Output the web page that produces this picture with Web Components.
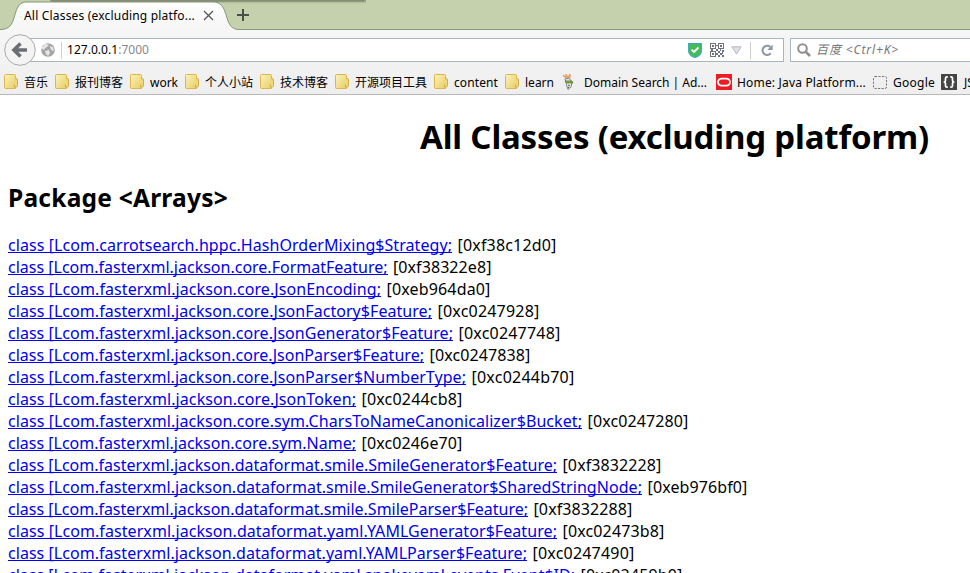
<!DOCTYPE html>
<html lang="zh-CN">
<head>
<meta charset="utf-8">
<title>All Classes (excluding platform)</title>
<style>
html,body{margin:0;height:573px;overflow:hidden;background:#fff}
body{font-family:"Noto Sans","Noto Sans CJK SC",sans-serif;color:#000}
</style>
</head>
<body>
<browser-window>
  <tab-strip slot="tabs"></tab-strip>
  <nav-bar slot="nav"></nav-bar>
  <bookmark-bar slot="bookmarks"></bookmark-bar>
  <class-page></class-page>
</browser-window>
<script>
const define = (name, html, setup) => {
  const t = document.createElement('template');
  t.innerHTML = html;
  customElements.define(name, class extends HTMLElement {
    connectedCallback() {
      if (this.shadowRoot) return;
      const root = this.attachShadow({mode: 'open'});
      root.append(t.content.cloneNode(true));
      if (setup) setup(this, root);
    }
  });
};

/* Single-line text that tracks its letters to occupy a given width. */
define('fit-text', `<style>:host{display:inline-block;white-space:pre}span{display:inline-block;text-decoration:inherit}</style><span><slot></slot></span>`,
  (el, root) => {
    const span = root.querySelector('span');
    const w = +el.getAttribute('w');
    const n = el.textContent.length;
    const natural = span.getBoundingClientRect().width;
    span.style.letterSpacing = ((w - natural) / n) + 'px';
    el.style.width = w + 'px';
  });

define('browser-window', `<style>:host{display:flex;flex-direction:column;width:970px;height:573px;overflow:hidden}
.bars{background:linear-gradient(#f6f6f6,#eeeeee);flex:none;height:64px;border-bottom:1px solid #b9b9b9;box-sizing:content-box}
::slotted(class-page){flex:1}</style>
<slot name="tabs"></slot><div class="bars"><slot name="nav"></slot><slot name="bookmarks"></slot></div><slot></slot>`);

define('tab-strip', `<style>
:host{display:flex;position:relative;height:30px;flex:none;background:#c4d1ac;font-size:12px;align-items:center}
svg.bg{position:absolute;left:0;top:0}
.title{position:relative;margin-left:24px;height:30px;line-height:32px}
.close{position:relative;margin-left:8px}.plus{position:relative;margin-left:23px}
</style>
<svg class="bg" width="970" height="30">
<defs><linearGradient id="s" x2="0" y2="1"><stop stop-color="#7f8b70"/><stop offset="1" stop-color="#c4d1ac" stop-opacity="0"/></linearGradient>
<linearGradient id="t" x2="0" y2="1"><stop stop-color="#fdfdfd"/><stop offset="1" stop-color="#f6f6f6"/></linearGradient></defs>
<rect x="50" width="316" height="5" fill="url(#s)"/>
<path d="M0 29.5H970" stroke="#829a7c"/>
<path d="M0 29.5C9 29.5 12 25 14 18C17 7 19 2 27 2H213C221 2 224 7 227 18C229 25 232 29.5 239 29.5V30H0Z" fill="url(#t)"/>
<path d="M0 29.5C9 29.5 12 25 14 18C17 7 19 2 27 2H213C221 2 224 7 227 18C229 25 232 29.5 239 29.5" fill="none" stroke="#879779"/>
<rect x="52" y="0" width="312" height="2" fill="#7f8773" opacity=".6"/>
</svg>
<fit-text class="title" w="171">All Classes (excluding platfo...</fit-text>
<svg class="close" width="11" height="11"><path d="M1 1L10 10M10 1L1 10" stroke="#555" stroke-width="1.3"/></svg>
<svg class="plus" width="12" height="12"><path d="M6 0V12M0 6H12" stroke="#4b4f46" stroke-width="2"/></svg>`);

define('nav-bar', `<style>
:host{display:flex;height:40px;padding-top:4px;box-sizing:border-box;font-size:12px}
.back{flex:none;margin-left:4px;z-index:1;position:relative}
.url,.search{box-sizing:border-box;height:24px;margin-top:4px;background:#fff;border:1px solid #abb5c0;display:flex;align-items:center;flex:none}
.url{width:754px;margin-left:-6px;padding-left:10px}
.sep{width:1px;height:17px;background:#cfcfcf;flex:none}
.addr{margin-left:5px;line-height:24px;color:#888}.addr b{font-weight:normal;color:#000}
.sp{flex:1}.search{width:190px;margin-left:6px;padding-left:6px;color:#777}
svg{flex:none}
i{display:flex;margin-left:5px;line-height:24px;white-space:pre}
</style>
<svg class="back" width="32" height="32"><circle cx="16" cy="16" r="15.3" fill="#f4f4f4" stroke="#a9a9a9"/><path d="M23 16H11M16.5 9.5L10 16L16.5 22.5" fill="none" stroke="#6b6e72" stroke-width="3.6"/></svg>
<div class="url">
<svg width="14" height="14"><circle cx="7" cy="7" r="6.8" fill="#a5a5a5"/><path d="M1 4L4 1L8 1.5L6 4L4 5L3 7L1 6ZM9 3L12 4L13 8L10 7ZM4 8L8 7L9 10L7 13L5 11Z" fill="#e6e6e6"/></svg>
<span class="sep" style="margin-left:6px"></span>
<fit-text class="addr" w="82"><b>127.0.0.1</b>:7000</fit-text><span class="sp"></span>
<svg width="14" height="15"><path d="M.7.7H13.3V8C13.3 11.5 10 13.5 7 14.5C4 13.5.7 11.5.7 8Z" fill="#45bd55" stroke="#3aa9bd" stroke-width="1.3"/><path d="M3.7 6.7L6 9L10.5 4.5" fill="none" stroke="#fff" stroke-width="1.8"/></svg>
<svg class="qr" width="14" height="14" style="margin-left:8px" shape-rendering="crispEdges"><g fill="none" stroke="#70757c"><path d="M.5.5H5.5V5.5H.5ZM8.5.5H13.5V5.5H8.5ZM.5 8.5H5.5V13.5H.5Z"/></g><path fill="#70757c" d="M2 2H4V4H2ZM10 2H12V4H10ZM2 10H4V12H2ZM6 2H8V3H6ZM6 6H8V8H6ZM1 6H3V8H1ZM8 8H10V10H8ZM12 7H14V9H12ZM10 10H12V12H10ZM8 12H10V14H8ZM12 12H14V14H12ZM10 6H11V8H10ZM12 9H13V11H12ZM6 10H8V12H6Z"/></svg>
<svg width="11" height="9" style="margin-left:7px"><path d="M.8.8H10.2L5.5 8Z" fill="#dfe1e5" stroke="#b3b8c0"/></svg>
<span class="sep" style="margin-left:8px"></span>
<svg width="13" height="13" style="margin:0 9px 0 10px"><path d="M9.8 9.2A4.6 4.6 0 1 1 9.2 3" fill="none" stroke="#8f99a4" stroke-width="2.1"/><path d="M11.7.5V6H6.3Z" fill="#8f99a4"/></svg>
</div>
<div class="search"><svg width="14" height="14"><circle cx="5.5" cy="5.5" r="4.3" fill="none" stroke="#8f8f8f" stroke-width="2"/><path d="M8.6 8.6L13 13" stroke="#8f8f8f" stroke-width="2.6"/></svg>
<i><fit-text w="83">百度 &lt;Ctrl+K&gt;</fit-text></i></div>`);

const icons = {
  folder: `<svg width="15" height="16"><path d="M.5 1.5Q.5.5 1.5.5H10.5Q11.5.5 11.5 1.5V14.5H1.5Q.5 14.5.5 13.5Z" fill="url(#f)" stroke="#ddb64b"/><path d="M11.5 4.5H12.5Q13.5 4.5 13.5 6V11.5Q13.5 13 12 13H10.5V10.5" fill="#f1d979" stroke="#d3ab46"/><defs><linearGradient id="f" y2="1"><stop stop-color="#fbf3bd"/><stop offset="1" stop-color="#e8ce66"/></linearGradient></defs></svg>`,
  daddy: `<svg width="13" height="17"><path d="M1 1L4 4L4 0L6 4L8 0L8 4" fill="none" stroke="#e9a262" stroke-width="1.4"/><path d="M3 5L7 4L10 8L9 13L6 15.5L4.5 11Z" fill="#e8e8e8" stroke="#858585"/><path d="M3 7H10L11 9H5Z" fill="#8bbf35" stroke="#52652f" stroke-width=".7"/><path d="M6 11L8 12M6 13L7 14" stroke="#555"/></svg>`,
  oracle: `<svg width="16" height="16"><path fill="#ed1c24" d="M0 0H16V16H0Z"/><rect x="2" y="4.6" width="12" height="7" rx="3.5" fill="none" stroke="#fff" stroke-width="1.8"/></svg>`,
  blank: `<svg width="15" height="15"><rect x=".5" y="1.5" width="13" height="12" rx="1.5" fill="none" stroke="#777" stroke-dasharray="2.2 1.3"/></svg>`,
  json: `<svg width="16" height="16"><rect width="16" height="16" fill="#454545"/><path d="M6.8 2.8H6Q4.5 2.8 4.5 4.3V6.3Q4.5 8 2.6 8Q4.5 8 4.5 9.7V11.7Q4.5 13.2 6 13.2H6.8M9.2 2.8H10Q11.5 2.8 11.5 4.3V6.3Q11.5 8 13.4 8Q11.5 8 11.5 9.7V11.7Q11.5 13.2 10 13.2H9.2" fill="none" stroke="#fff" stroke-width="1.7"/></svg>`
};
define('book-mark', `<style>:host{display:flex;flex:none;align-items:center;height:22px;font-size:12px;line-height:22px}
.icon{display:flex;flex:none}slot{display:block;padding-top:2px}</style><span class="icon"></span><slot></slot>`,
  (el, root) => {
    const icon = root.querySelector('.icon');
    icon.innerHTML = icons[el.getAttribute('icon')];
    icon.style.width = el.getAttribute('lead') + 'px';
    el.style.width = el.getAttribute('pitch') + 'px';
  });

const marks = [
  ['folder',20,51,24,'音乐'],['folder',20,75,48,'报刊博客'],['folder',20,55,28,'work'],
  ['folder',20,75,48,'个人小站'],['folder',20,75,48,'技术博客'],['folder',20,99,72,'开源项目工具'],
  ['folder',20,71,44,'content'],['folder',20,57,29,'learn'],['daddy',22,154,123,'Domain Search | Ad...'],
  ['oracle',21,157,129,'Home: Java Platform...'],['blank',20,68,42,'Google'],['json',23,60,28,'JSON']];
define('bookmark-bar', `<style>:host{display:flex;padding-left:4px;height:24px;padding-top:1px;box-sizing:border-box;overflow:hidden}</style>` +
  marks.map(([i,l,p,w,t]) => `<book-mark icon="${i}" lead="${l}" pitch="${p}"><fit-text w="${w}">${t}</fit-text></book-mark>`).join(''));

define('class-row', `<style>:host{display:flex;height:22px;line-height:22px;gap:5.5px;font-size:16px}
a{color:#0000ee;text-decoration:none;height:19px;border-bottom:1px solid #0000ee;box-sizing:border-box;display:flex;line-height:22px}</style>
<a href="#"><slot name="link"></slot></a><slot></slot>`);

const J = 'com.fasterxml.jackson.';
const rows = [
  ['com.carrotsearch.hppc.HashOrderMixing$Strategy','f38c12d0',452,556],
  [J+'core.FormatFeature','f38322e8',387.5,491],
  [J+'core.JsonEncoding','eb964da0',381,490],
  [J+'core.JsonFactory$Feature','c0247928',432,539],
  [J+'core.JsonGenerator$Feature','c0247748',453,560],
  [J+'core.JsonParser$Feature','c0247838',424,530],
  [J+'core.JsonParser$NumberType','c0244b70',466,574],
  [J+'core.JsonToken','c0244cb8',356,462],
  [J+'core.sym.CharsToNameCanonicalizer$Bucket','c0247280',582,688],
  [J+'core.sym.Name','c0246e70',356,462],
  [J+'dataformat.smile.SmileGenerator$Feature','f3832228',557,661],
  [J+'dataformat.smile.SmileGenerator$SharedStringNode','eb976bf0',642,747],
  [J+'dataformat.smile.SmileParser$Feature','f3832288',528,632],
  [J+'dataformat.yaml.YAMLGenerator$Feature','c02473b8',557,664],
  [J+'dataformat.yaml.YAMLParser$Feature','c0247490',527,634],
  [J+'dataformat.yaml.snakeyaml.events.Event$ID','c02459b0',575,682]];
define('class-page', `<style>
:host{display:block;width:1349px;padding:0 8px;box-sizing:border-box;overflow:hidden;background:#fff}
h1,h2{margin:0;display:flex;font-weight:bold}
h1{justify-content:center;font-size:33px;line-height:44px;padding-top:20px;height:45px}
h2{font-size:24.5px;line-height:32px;padding-top:22px;margin-bottom:20px;height:32px}
</style>
<h1><fit-text w="509">All Classes (excluding platform)</fit-text></h1>
<h2><fit-text w="220">Package &lt;Arrays&gt;</fit-text></h2>` +
  rows.map(([c,a,x,e]) => `<class-row><fit-text slot="link" w="${x-8}">class [L${c};</fit-text><fit-text w="${e-x-5}">[0x${a}]</fit-text></class-row>`).join(''));
</script>
</body>
</html>
